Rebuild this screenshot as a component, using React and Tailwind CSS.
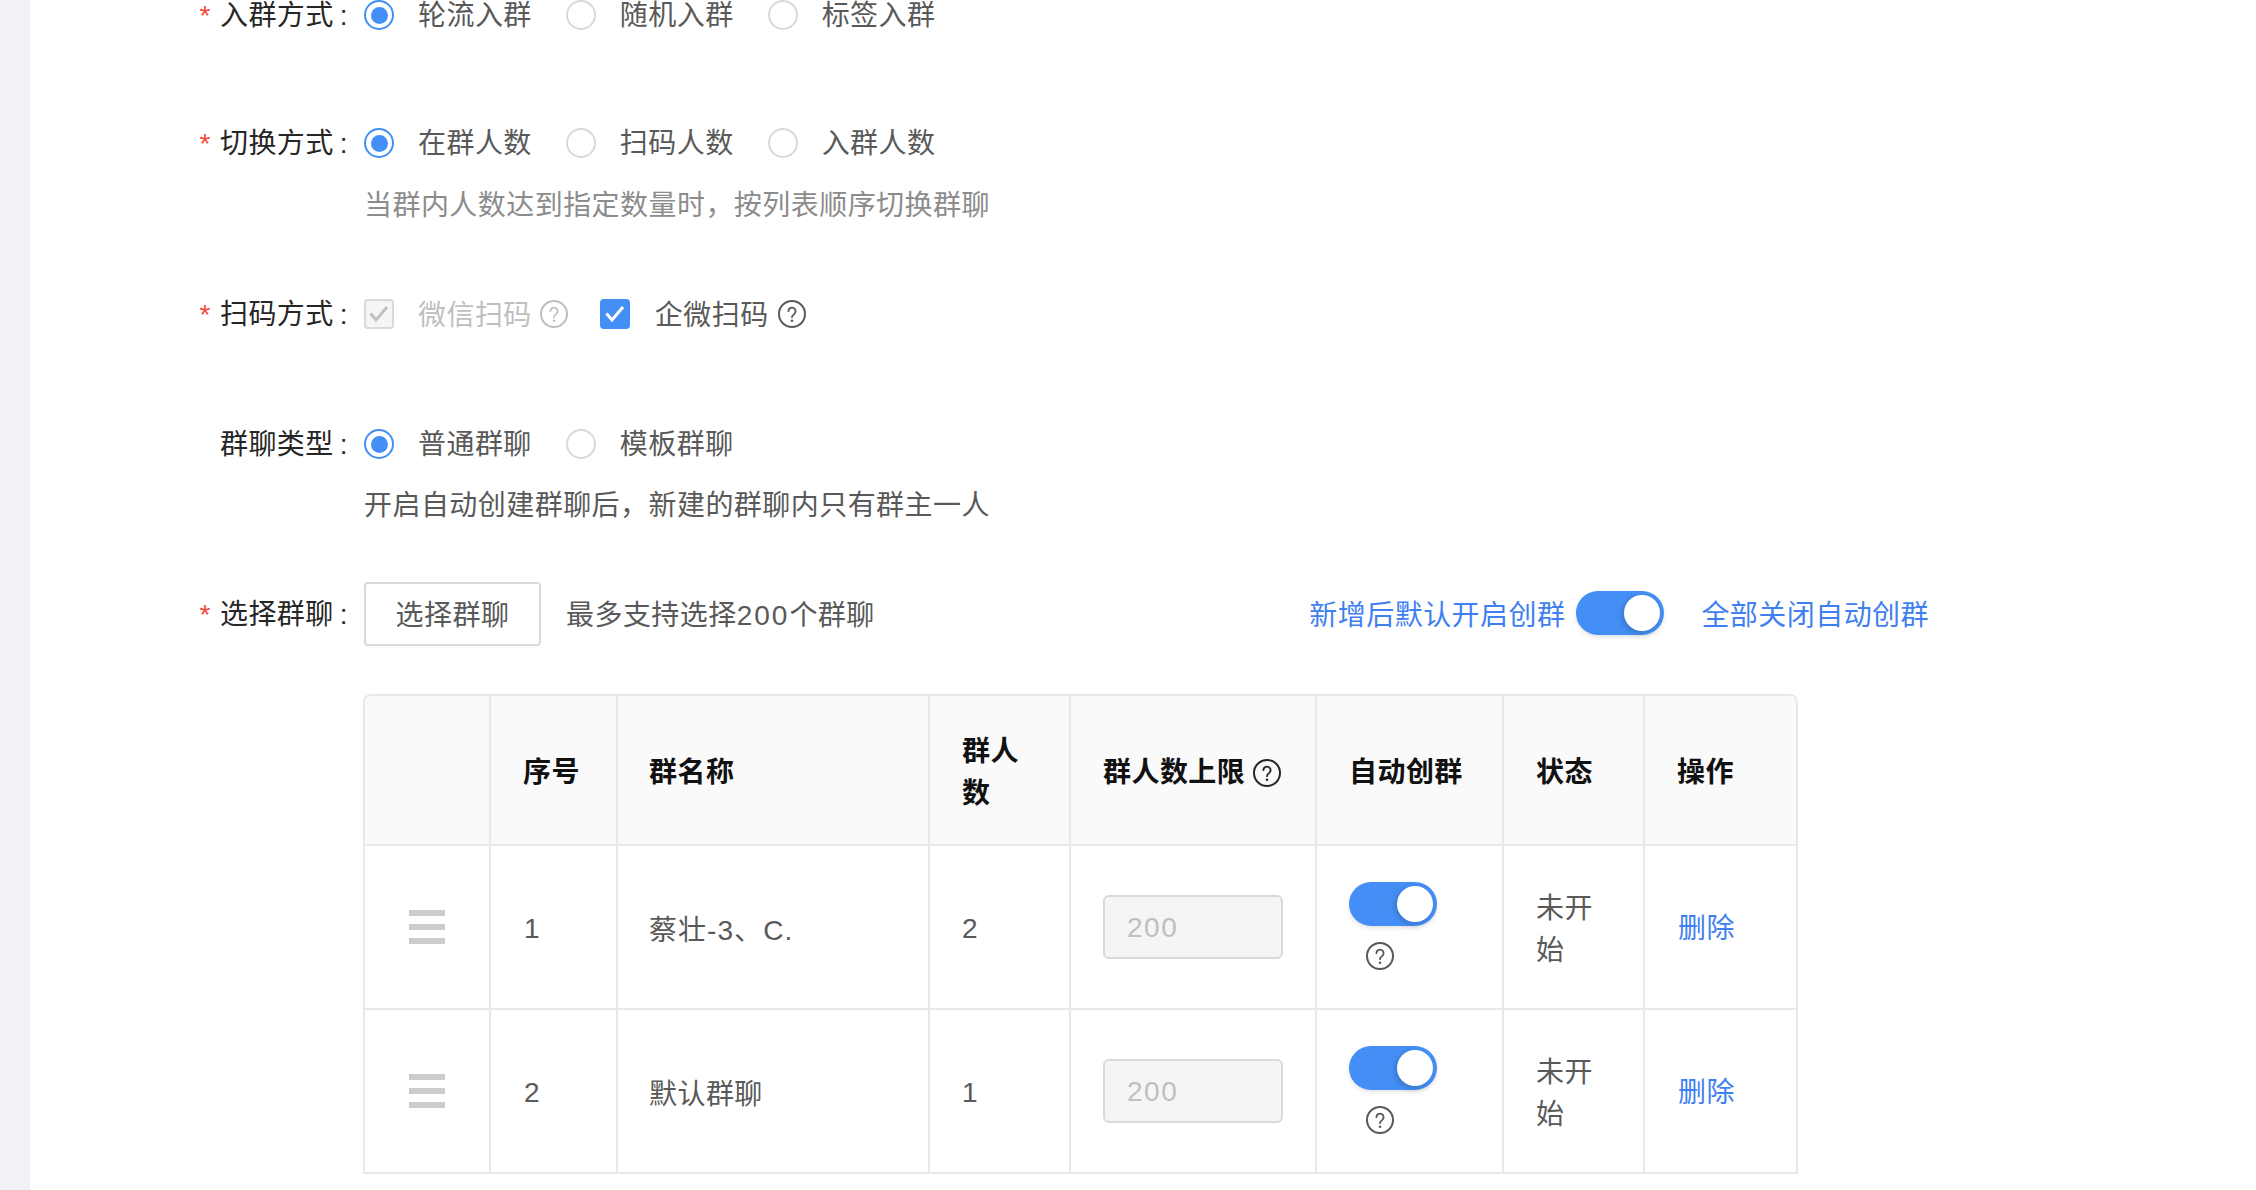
import React from "react";

const Help = ({ className = "text-[#595959]" }) => (
  <svg width="28" height="28" viewBox="0 0 28 28" fill="none" className={`shrink-0 ${className}`}>
    <circle cx="14" cy="14" r="13" stroke="currentColor" strokeWidth="2" />
    <path
      d="M10.4 11.2a3.6 3.6 0 1 1 5.6 3c-1.3.8-2 1.5-2 3"
      stroke="currentColor"
      strokeWidth="1.8"
      strokeLinecap="round"
    />
    <circle cx="14" cy="20.8" r="1.3" fill="currentColor" />
  </svg>
);

const Check = ({ color }) => (
  <svg width="24" height="24" viewBox="0 0 24 24" fill="none">
    <path d="M3.5 11.5l5.5 6.5L20 5" stroke={color} strokeWidth="3" />
  </svg>
);

const Radio = ({ checked }) => (
  <span
    className={`flex items-center justify-center w-[30px] h-[30px] rounded-full border-2 shrink-0 bg-white ${
      checked ? "border-[#448ff6]" : "border-[#d9d9d9]"
    }`}
  >
    {checked && <span className="w-[17px] h-[17px] rounded-full bg-[#448ff6]" />}
  </span>
);

const RadioGroup = ({ options }) => (
  <div className="flex items-center">
    {options.map((option, i) => (
      <label key={option} className="flex items-center mr-[34px]">
        <Radio checked={i === 0} />
        <span className="ml-[24px] pt-[1px] text-[#595959]">{option}</span>
      </label>
    ))}
  </div>
);

const Toggle = () => (
  <span className="flex items-center justify-end w-[88px] h-[44px] pr-[4px] rounded-full bg-[#448ff6] shadow-[0_2px_4px_rgba(0,0,0,0.12)] shrink-0">
    <span className="w-[36px] h-[36px] rounded-full bg-white shadow-[-2px_2px_6px_rgba(0,0,0,0.2)]" />
  </span>
);

const FormRow = ({ label, required, children, className = "" }) => (
  <div className={`flex items-center h-[64px] ${className}`}>
    <div className="flex items-center justify-end w-[334px] pt-[1px] pr-[16px] shrink-0 text-[#262626]">
      {required && <span className="mr-[9px] text-[#f5483b]">*</span>}
      <span>{label}</span>
      <span className="ml-[6px]">:</span>
    </div>
    {children}
  </div>
);

const Hint = ({ children, className = "" }) => (
  <p className={`ml-[334px] leading-[42px] ${className}`}>{children}</p>
);

const DragHandle = () => (
  <svg width="36" height="40" viewBox="0 0 36 40" className="mx-auto">
    <rect x="0" y="3" width="36" height="6" fill="#cccccc" />
    <rect x="0" y="17" width="36" height="6" fill="#cccccc" />
    <rect x="0" y="31" width="36" height="6" fill="#cccccc" />
  </svg>
);

const columns = [126, 127, 312, 141, 246, 187, 141, 153];

const groups = [
  { id: 1, name: "蔡壮-3、C.", count: 2, nameClass: "tracking-[1.05px]" },
  { id: 2, name: "默认群聊", count: 1, nameClass: "" },
];

const th = "pl-[32px] pr-[32px] pt-[5px] border-r-2 border-b-2 border-[#e8e8e8] bg-[#fafafa] text-left font-semibold text-[#111111]";
const td = "pl-[32px] pr-[32px] border-r-2 border-b-2 border-[#e8e8e8]";

export default function App() {
  return (
    <div
      className="flex h-[1190px] overflow-hidden bg-white text-[28px] leading-[42px] tracking-[0.45px]"
      style={{ fontFamily: '"Liberation Sans", "Noto Sans CJK SC", sans-serif' }}
    >
      <div className="w-[30px] shrink-0 bg-[#f0f2f5]" />
      <div className="flex-1 -mt-[17px]">
        <FormRow label="入群方式" required className="mb-[64px]">
          <RadioGroup options={["轮流入群", "随机入群", "标签入群"]} />
        </FormRow>

        <FormRow label="切换方式" required>
          <RadioGroup options={["在群人数", "扫码人数", "入群人数"]} />
        </FormRow>
        <Hint className="mt-[10px] mb-[55px] text-[#8c8c8c]">当群内人数达到指定数量时，按列表顺序切换群聊</Hint>

        <FormRow label="扫码方式" required className="mb-[66px]">
          <span className="flex items-center justify-center w-[30px] h-[30px] rounded-[4px] border-2 border-[#d9d9d9] bg-[#f5f5f5]">
            <Check color="#bfbfbf" />
          </span>
          <span className="ml-[24px] pt-[3px] text-[#bfbfbf]">微信扫码</span>
          <span className="ml-[8px]">
            <Help className="text-[#bfbfbf]" />
          </span>
          <span className="ml-[32px] flex items-center justify-center w-[30px] h-[30px] rounded-[4px] bg-[#448ff6]">
            <Check color="#ffffff" />
          </span>
          <span className="ml-[25px] pt-[3px] text-[#595959]">企微扫码</span>
          <span className="ml-[9px]">
            <Help />
          </span>
        </FormRow>

        <FormRow label="群聊类型">
          <RadioGroup options={["普通群聊", "模板群聊"]} />
        </FormRow>
        <Hint className="mt-[9px] mb-[55px] text-[#595959]">开启自动创建群聊后，新建的群聊内只有群主一人</Hint>

        <FormRow label="选择群聊" required className="w-[1899px]">
          <button className="w-[177px] h-[64px] pt-[3px] rounded-[4px] border-2 border-[#d9d9d9] bg-white text-[#595959] shadow-[0_2px_0_rgba(0,0,0,0.015)]">
            选择群聊
          </button>
          <span className="ml-[25px] pt-[3px] text-[#595959]">
            最多支持选择<span className="tracking-[2px]">200</span>个群聊
          </span>
          <div className="ml-auto flex items-center text-[#3f7ff0]">
            <span className="pt-[3px]">新增后默认开启创群</span>
            <span className="ml-[11px] mr-[37px] mb-[3px]">
              <Toggle />
            </span>
            <span className="pt-[3px]">全部关闭自动创群</span>
          </div>
        </FormRow>

        <div className="mt-[48px] ml-[333px] w-[1435px] rounded-t-[8px] overflow-hidden border-t-2 border-l-2 border-[#e8e8e8]">
          <table className="table-fixed w-[1433px] border-separate border-spacing-0">
            <colgroup>
              {columns.map((w, i) => (
                <col key={i} style={{ width: w }} />
              ))}
            </colgroup>
            <thead>
              <tr className="h-[150px]">
                <th className={th} />
                <th className={th}>序号</th>
                <th className={`${th} !pl-[31px]`}>群名称</th>
                <th className={th}>群人数</th>
                <th className={th}>
                  <span className="flex items-center gap-[8px] whitespace-nowrap">
                    群人数上限 <Help className="text-[#262626]" />
                  </span>
                </th>
                <th className={th}>自动创群</th>
                <th className={th}>状态</th>
                <th className={`${th} rounded-tr-[8px]`}>操作</th>
              </tr>
            </thead>
            <tbody>
              {groups.map((group) => (
                <tr key={group.id} className="h-[164px]">
                  <td className={td}>
                    <DragHandle />
                  </td>
                  <td className={`${td} pt-[4px] !pl-[33px] text-[#595959]`}>{group.id}</td>
                  <td className={`${td} pt-[8px] !pl-[31px] text-[#595959] ${group.nameClass}`}>{group.name}</td>
                  <td className={`${td} pt-[4px] text-[#595959]`}>{group.count}</td>
                  <td className={td}>
                    <input
                      disabled
                      value="200"
                      className="w-[180px] h-[64px] px-[22px] pt-[2px] rounded-[6px] border-2 border-[#d9d9d9] bg-[#f5f5f5] text-[#bfbfbf] tracking-[1.5px]"
                    />
                  </td>
                  <td className={td}>
                    <div className="flex flex-col items-start gap-[16px] mb-[3px]">
                      <Toggle />
                      <span className="ml-[17px]">
                        <Help />
                      </span>
                    </div>
                  </td>
                  <td className={`${td} pt-[5px] text-[#595959]`}>未开始</td>
                  <td className={`${td} pt-[4px] !pl-[33px] text-[#3f7ff0]`}>删除</td>
                </tr>
              ))}
            </tbody>
          </table>
        </div>
      </div>
    </div>
  );
}
